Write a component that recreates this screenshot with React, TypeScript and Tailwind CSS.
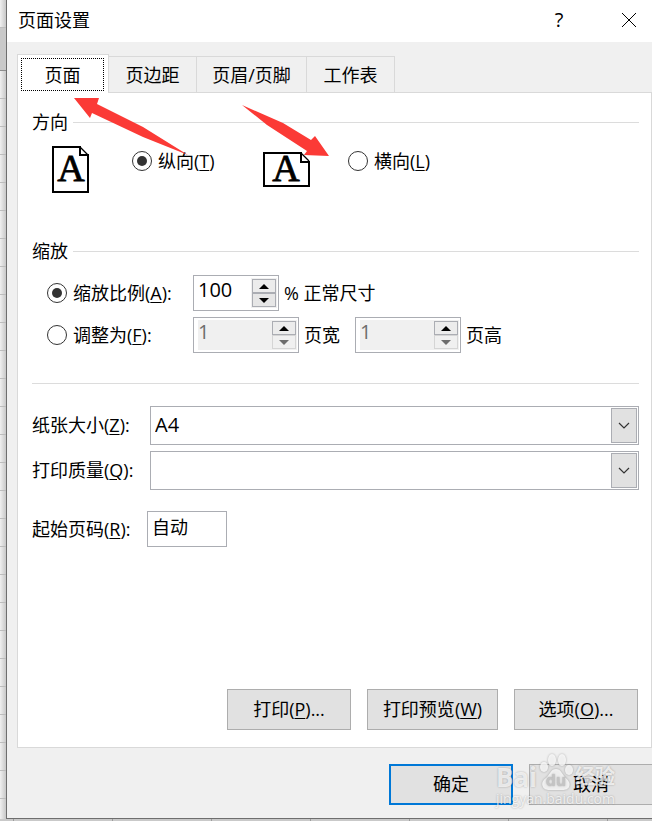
import { useState } from 'react';
import type { ReactNode } from 'react';
import clsx from 'clsx';

const TABS = [
  { name: '页面', width: 'w-[92px]' },
  { name: '页边距', width: 'w-[88px]' },
  { name: '页眉/页脚', width: 'w-[110px]' },
  { name: '工作表', width: 'w-[88px]' },
];

const radioClass =
  "grid size-5 shrink-0 appearance-none place-content-center rounded-full border border-[#333] bg-white before:size-[10px] before:rounded-full before:content-[''] checked:before:bg-[#333]";

function Key({ children }: { children: string }) {
  return (
    <>
      (<span className="underline underline-offset-2">{children}</span>)
    </>
  );
}

function SectionTitle({ children }: { children: ReactNode }) {
  return (
    <div className="flex items-center gap-[5px]">
      <h2>{children}</h2>
      <div className="h-px flex-1 bg-[#dcdcdc]" />
    </div>
  );
}

function PortraitIcon() {
  return (
    <svg width="38" height="47" viewBox="0 0 38 47" className="overflow-visible" aria-hidden="true">
      <path d="M28 1H1V46H36V9" fill="none" stroke="#000" strokeWidth="2" shapeRendering="crispEdges" />
      <path d="M28 0V9H37" fill="none" stroke="#000" strokeWidth="2" shapeRendering="crispEdges" />
      <path d="M28 1L36 9" fill="none" stroke="#000" strokeWidth="1.2" />
      <text
        x="19"
        y="35"
        textAnchor="middle"
        fontFamily="Liberation Serif, serif"
        fontSize="38"
        stroke="#000"
        strokeWidth="0.8"
      >
        A
      </text>
    </svg>
  );
}

function LandscapeIcon() {
  return (
    <svg width="48" height="35" viewBox="0 0 48 35" className="overflow-visible" aria-hidden="true">
      <path d="M38 1H1V34H46V9" fill="none" stroke="#000" strokeWidth="2" shapeRendering="crispEdges" />
      <path d="M38 0V10H47" fill="none" stroke="#000" strokeWidth="2" shapeRendering="crispEdges" />
      <path d="M38 1L46 9" fill="none" stroke="#000" strokeWidth="1.2" />
      <text
        x="23"
        y="29"
        textAnchor="middle"
        fontFamily="Liberation Serif, serif"
        fontSize="38"
        stroke="#000"
        strokeWidth="0.8"
      >
        A
      </text>
    </svg>
  );
}

function Spinner({ label, initial, dimmed, width }: { label: string; initial: number; dimmed?: boolean; width: string }) {
  const [value, setValue] = useState(initial);
  return (
    <div className={clsx('flex h-9 border border-[#abadb3] bg-white py-[2px] pr-px pl-1', width)}>
      <input
        aria-label={label}
        value={value}
        onChange={(e) => setValue(Number(e.target.value) || 0)}
        className={clsx(
          'min-w-0 flex-1 pb-[6px] text-xl leading-6 outline-none',
          dimmed ? 'bg-[#f0f0f0] text-[#6d6d6d]' : 'bg-white',
        )}
      />
      <div className="flex w-[26px] flex-col border border-[#f0f0f0] bg-[#f0f0f0]">
        <button
          type="button"
          aria-label={`${label} +`}
          onClick={() => setValue(value + 1)}
          className="flex flex-1 items-center justify-center border border-[#abadb3] bg-[#ececec]"
        >
          <svg width="10" height="5" viewBox="0 0 10 5">
            <path d="M5 0L10 5H0Z" fill="#000" />
          </svg>
        </button>
        <button
          type="button"
          aria-label={`${label} -`}
          onClick={() => setValue(Math.max(1, value - 1))}
          className={clsx(
            'flex flex-1 items-center justify-center border',
            dimmed ? 'border-[#d5d5d5] bg-[#f0f0f0]' : 'border-[#abadb3] bg-[#e6e6e6]',
          )}
        >
          <svg width="10" height="5" viewBox="0 0 10 5">
            <path d="M0 0H10L5 5Z" fill={dimmed ? '#6d6d6d' : '#000'} />
          </svg>
        </button>
      </div>
    </div>
  );
}

function SelectRow({ id, label, letter, options }: { id: string; label: string; letter: string; options: string[] }) {
  return (
    <div className="flex items-center">
      <label htmlFor={id} className="w-[118px] shrink-0 pb-[2px]">
        {label}
        <Key>{letter}</Key>:
      </label>
      <div className="relative flex-1">
        <select
          id={id}
          className="block h-[39px] w-full appearance-none border border-[#abadb3] bg-white pb-[2px] pl-1 text-xl leading-6 outline-none"
        >
          {options.map((o) => (
            <option key={o}>{o}</option>
          ))}
        </select>
        <span className="pointer-events-none absolute inset-y-[2px] right-[2px] flex w-[26px] items-center justify-center border border-[#abadb3] bg-[#e1e1e1]">
          <svg width="12" height="7" viewBox="0 0 12 7">
            <path d="M1 1L6 6L11 1" fill="none" stroke="#333" strokeWidth="1.2" />
          </svg>
        </span>
      </div>
    </div>
  );
}

function DialogButton({ className, children }: { className: string; children: ReactNode }) {
  return (
    <button type="button" className={clsx('h-[41px] shrink-0 bg-[#e1e1e1] pb-[2px]', className)}>
      {children}
    </button>
  );
}

function Watermark() {
  return (
    <div className="pointer-events-none absolute right-[37px] bottom-[14px] flex flex-col font-['Open_Sans','Noto_Sans_CJK_SC',sans-serif] text-white/75 [text-shadow:0_0_2px_#0000004d]">
      <div className="flex items-end justify-between">
        <span className="text-[26px] leading-7 font-bold">Bai</span>
        <svg width="34" height="38" viewBox="0 0 34 38" className="drop-shadow-[0_0_1px_#00000059]">
          <g fill="#fff" fillOpacity="0.8">
            <ellipse cx="5" cy="14" rx="4" ry="5" />
            <ellipse cx="13" cy="7" rx="4" ry="6" />
            <ellipse cx="23" cy="7" rx="4" ry="6" />
            <ellipse cx="30" cy="17" rx="4" ry="5" />
            <path d="M17 16c-5 0-6 5-9 8-4 3-6 6-4 10 2 4 8 3 13 3s11 1 13-3c2-4-1-7-4-10-3-3-4-8-9-8Z" />
          </g>
          <text x="17" y="33" textAnchor="middle" fontSize="16" fontWeight="700" fill="#c4c4c4">
            du
          </text>
        </svg>
        <span className="text-[20px] leading-7 font-bold">经验</span>
      </div>
      <span className="text-sm leading-4">jingyan.baidu.com</span>
    </div>
  );
}

export default function App() {
  const [tab, setTab] = useState('页面');
  const [orientation, setOrientation] = useState('portrait');
  const [scaling, setScaling] = useState('ratio');

  return (
    <div className="relative flex min-h-screen flex-col overflow-hidden bg-[#c9c9c9] font-['Open_Sans','Noto_Sans_CJK_SC',sans-serif] text-lg leading-6 text-black">
      <div className="flex flex-1">
        {/* edge of the worksheet behind the dialog */}
        <div className="w-[6px] shrink-0 overflow-hidden bg-linear-to-r from-[#f0f0f0] to-[#c8c8c8]">
          <div className="h-7 border-b border-[#bdbdbd]" />
          <div className="h-[43px] border-b border-[#8c8c8c] bg-[#c9c9c9]" />
          {Array.from({ length: 26 }, (_, i) => (
            <div key={i} className="h-7 border-b border-[#bdbdbd]" />
          ))}
        </div>

        <div className="flex min-w-0 flex-1 flex-col border-b border-l border-[#6e6e6e] bg-[#f0f0f0]">
          <header className="flex h-[42px] items-center bg-white pb-[2px] pl-[11px]">
            <h1 className="flex-1">页面设置</h1>
            <button type="button" aria-label="帮助" className="w-[46px] text-xl">
              ?
            </button>
            <button type="button" aria-label="关闭" className="ml-6 flex w-[46px] justify-center">
              <svg width="16" height="16" viewBox="0 0 16 16">
                <path d="M1 1L15 15M15 1L1 15" fill="none" stroke="#000" strokeWidth="1" />
              </svg>
            </button>
          </header>

          <main className="flex flex-1 flex-col pt-3 pl-[10px]">
            <div role="tablist" className="flex h-[38px] items-end">
              {TABS.map((t) => (
                <button
                  key={t.name}
                  type="button"
                  role="tab"
                  aria-selected={tab === t.name}
                  onClick={() => setTab(t.name)}
                  className={clsx(
                    'border-t border-r border-[#d9d9d9]',
                    t.width,
                    tab === t.name ? 'relative -mb-px h-[39px] border-l bg-white pt-[3px] pr-1 pb-[2px] pl-[3px]' : 'h-9',
                  )}
                >
                  {tab === t.name ? (
                    <span className="flex h-full items-center justify-center border border-dotted border-black">
                      {t.name}
                    </span>
                  ) : (
                    t.name
                  )}
                </button>
              ))}
            </div>

            <section className="flex flex-1 flex-col border border-[#d9d9d9] bg-white pt-[17px] pr-3 pb-[17px] pl-[14px]">
              <SectionTitle>方向</SectionTitle>
              <div className="mt-3 grid grid-cols-[80px_131px_85px_auto] items-center pl-5">
                <PortraitIcon />
                <label className="flex items-center gap-[6px] self-start pt-[3px]">
                  <input
                    type="radio"
                    name="orientation"
                    className={radioClass}
                    checked={orientation === 'portrait'}
                    onChange={() => setOrientation('portrait')}
                  />
                  <span>
                    纵向<Key>T</Key>
                  </span>
                </label>
                <LandscapeIcon />
                <label className="flex items-center gap-[6px] self-start pt-[3px]">
                  <input
                    type="radio"
                    name="orientation"
                    className={radioClass}
                    checked={orientation === 'landscape'}
                    onChange={() => setOrientation('landscape')}
                  />
                  <span>
                    横向<Key>L</Key>
                  </span>
                </label>
              </div>

              <div className="mt-[46px]">
                <SectionTitle>缩放</SectionTitle>
              </div>
              <div className="mt-3 flex flex-col gap-[6px] pl-[15px]">
                <div className="flex items-center">
                  <label className="flex w-[146px] items-center gap-[6px]">
                    <input
                      type="radio"
                      name="scaling"
                      className={radioClass}
                      checked={scaling === 'ratio'}
                      onChange={() => setScaling('ratio')}
                    />
                    <span>
                      缩放比例<Key>A</Key>:
                    </span>
                  </label>
                  <Spinner label="缩放比例" initial={100} width="w-[86px]" />
                  <span className="ml-[5px]">% 正常尺寸</span>
                </div>
                <div className="flex items-center">
                  <label className="flex w-[146px] items-center gap-[6px]">
                    <input
                      type="radio"
                      name="scaling"
                      className={radioClass}
                      checked={scaling === 'fit'}
                      onChange={() => setScaling('fit')}
                    />
                    <span>
                      调整为<Key>F</Key>:
                    </span>
                  </label>
                  <Spinner label="页宽" initial={1} dimmed width="w-[106px]" />
                  <span className="mr-[15px] ml-[5px]">页宽</span>
                  <Spinner label="页高" initial={1} dimmed width="w-[106px]" />
                  <span className="ml-[5px]">页高</span>
                </div>
              </div>

              <hr className="mt-[30px] border-[#dcdcdc]" />

              <div className="mt-[22px] flex flex-col gap-[6px]">
                <SelectRow id="paper" label="纸张大小" letter="Z" options={['A4']} />
                <SelectRow id="quality" label="打印质量" letter="Q" options={['']} />
              </div>
              <div className="mt-[21px] flex items-center">
                <label htmlFor="first-page" className="w-[115px] shrink-0">
                  起始页码<Key>R</Key>:
                </label>
                <input
                  id="first-page"
                  defaultValue="自动"
                  className="h-9 w-20 border border-[#abadb3] bg-white px-1 pb-[6px] outline-none"
                />
              </div>

              <div className="mt-auto flex justify-end gap-4 pr-px">
                <DialogButton className="w-[124px] border border-[#adadad]">
                  打印<Key>P</Key>...
                </DialogButton>
                <DialogButton className="w-[131px] border border-[#adadad]">
                  打印预览<Key>W</Key>
                </DialogButton>
                <DialogButton className="w-[124px] border border-[#adadad]">
                  选项<Key>O</Key>...
                </DialogButton>
              </div>
            </section>

            <footer className="flex justify-end gap-4 pt-4 pb-[13px]">
              <DialogButton className="w-[124px] border-2 border-[#0078d7]">确定</DialogButton>
              <DialogButton className="w-[123px] border border-r-0 border-[#adadad]">取消</DialogButton>
            </footer>
          </main>
        </div>
      </div>

      <div className="flex h-[2px] overflow-hidden">
        <div className="w-[14px] shrink-0 border-r border-[#9c9c9c]" />
        {Array.from({ length: 20 }, (_, i) => (
          <div key={i} className="w-[99px] shrink-0 border-r border-[#9c9c9c]" />
        ))}
      </div>

      {/* red pointer arrows */}
      <svg className="pointer-events-none absolute top-[97px] left-[73px]" width="118" height="60" viewBox="73 97 118 60">
        <path d="M74 98H99L97 104L143 127L188 155L143 137L92 113L90 118Z" fill="#fb3a36" />
      </svg>
      <svg className="pointer-events-none absolute top-[104px] left-[241px]" width="90" height="55" viewBox="241 104 90 55">
        <path d="M242 105L283 123L311 140L315 136L329 156L304 155L307 151L267 125Z" fill="#fb3a36" />
      </svg>

      <Watermark />
    </div>
  );
}
